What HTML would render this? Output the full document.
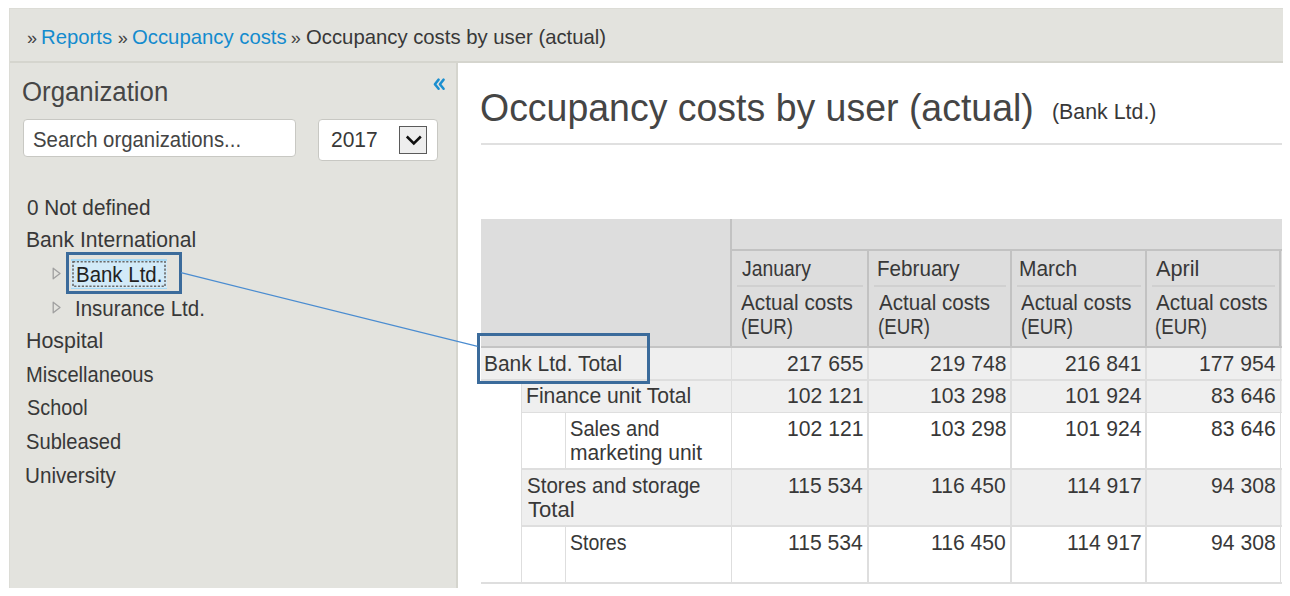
<!DOCTYPE html>
<html><head><meta charset="utf-8">
<style>
html,body{margin:0;padding:0;background:#fff;width:1290px;height:596px;overflow:hidden;position:relative;font-family:"Liberation Sans",sans-serif;color:#333;}
.a{position:absolute;}
.t{position:absolute;white-space:nowrap;line-height:1;transform-origin:0 0;}
.inp{position:absolute;background:#fff;border:1.5px solid #c8c8c3;border-radius:4px;box-sizing:border-box;}
</style></head><body>
<div class="a" style="left:9px;top:8px;width:1274px;height:53px;background:#e3e3de;"></div>
<div class="a" style="left:9px;top:61px;width:1274px;height:2px;background:#d5d5ce;"></div>
<div class="a" style="left:9px;top:63px;width:447px;height:524.5px;background:#e3e3de;"></div>
<div class="a" style="left:456px;top:63px;width:2px;height:524.5px;background:#d5d5ce;"></div>
<svg class="a" style="left:431px;top:76px" width="16" height="16" viewBox="0 0 16 16"><path d="M7.6 3.6 L3.9 8.2 L7.6 12.8 M12.6 3.6 L8.9 8.2 L12.6 12.8" fill="none" stroke="#1b8fd0" stroke-width="2.5" stroke-linecap="round" stroke-linejoin="round"/></svg>
<div class="inp" style="left:23px;top:119px;width:273px;height:38px;"></div>
<div class="inp" style="left:318px;top:119px;width:120px;height:42px;"></div>
<div class="a" style="left:399px;top:126px;width:28px;height:28px;border:1.5px solid #5a5a5a;background:#eeeeee;box-sizing:border-box;"></div>
<svg class="a" style="left:399px;top:126px" width="28" height="28" viewBox="0 0 28 28"><path d="M7.8 10.5 L14.8 17.5 L21.8 10.5" fill="none" stroke="#111" stroke-width="2.5"/></svg>
<div class="a" style="left:71px;top:259px;width:96px;height:30px;background:#d2eaf8;"></div>
<div class="a" style="left:71px;top:259px;width:96px;height:1.5px;background:#a6daf6;"></div>
<div class="a" style="left:71px;top:287.5px;width:96px;height:1.5px;background:#a6daf6;"></div>
<svg class="a" style="left:71px;top:259px" width="96" height="30"><rect x="2" y="2.7" width="92" height="24.6" fill="none" stroke="#6a6a6a" stroke-width="1.6" stroke-dasharray="2.2 1.6"/></svg>
<svg class="a" style="left:52px;top:267px" width="10" height="13" viewBox="0 0 10 13"><path d="M1.2 1.2 L8 6.5 L1.2 11.8 Z" fill="none" stroke="#a0a0a0" stroke-width="1.3" stroke-linejoin="round"/></svg>
<svg class="a" style="left:52px;top:301px" width="10" height="13" viewBox="0 0 10 13"><path d="M1.2 1.2 L8 6.5 L1.2 11.8 Z" fill="none" stroke="#a0a0a0" stroke-width="1.3" stroke-linejoin="round"/></svg>
<div class="a" style="left:9px;top:8px;width:1274px;height:1px;background:#dcdcd6;"></div>
<div class="a" style="left:9px;top:8px;width:1px;height:579.5px;background:#dcdcd6;"></div>
<div class="a" style="left:481px;top:143px;width:801px;height:2px;background:#e0e0e0;"></div>
<div class="a" style="left:481px;top:219px;width:801px;height:128px;background:#dddddd;"></div>
<div class="a" style="left:730px;top:219px;width:2px;height:128px;background:#c2c2c2;"></div>
<div class="a" style="left:731px;top:249px;width:551px;height:2px;background:#c2c2c2;"></div>
<div class="a" style="left:866.5px;top:250px;width:2px;height:97px;background:#c2c2c2;"></div>
<div class="a" style="left:1009.5px;top:250px;width:2px;height:97px;background:#c2c2c2;"></div>
<div class="a" style="left:1144.5px;top:250px;width:2px;height:97px;background:#c2c2c2;"></div>
<div class="a" style="left:1279px;top:250px;width:2px;height:97px;background:#c2c2c2;"></div>
<div class="a" style="left:737px;top:285.3px;width:125.5px;height:1.8px;background:#d0d0d0;"></div>
<div class="a" style="left:873.5px;top:285.3px;width:132.0px;height:1.8px;background:#d0d0d0;"></div>
<div class="a" style="left:1016.5px;top:285.3px;width:124.0px;height:1.8px;background:#d0d0d0;"></div>
<div class="a" style="left:1151.5px;top:285.3px;width:123.5px;height:1.8px;background:#d0d0d0;"></div>
<div class="a" style="left:481px;top:346px;width:801px;height:2px;background:#c4c4c4;"></div>
<div class="a" style="left:481px;top:348px;width:801px;height:31.5px;background:#efefef;"></div>
<div class="a" style="left:481px;top:379.0px;width:801px;height:1.5px;background:#dedede;"></div>
<div class="a" style="left:521.5px;top:380.5px;width:760.5px;height:31.5px;background:#efefef;"></div>
<div class="a" style="left:521.5px;top:411.5px;width:760.5px;height:1.5px;background:#dedede;"></div>
<div class="a" style="left:565.5px;top:413px;width:716.5px;height:55.5px;background:#ffffff;"></div>
<div class="a" style="left:521.5px;top:468.0px;width:760.5px;height:1.5px;background:#dedede;"></div>
<div class="a" style="left:521.5px;top:469.5px;width:760.5px;height:56.0px;background:#efefef;"></div>
<div class="a" style="left:521.5px;top:525.0px;width:760.5px;height:1.5px;background:#dedede;"></div>
<div class="a" style="left:565.5px;top:526.5px;width:716.5px;height:56.0px;background:#ffffff;"></div>
<div class="a" style="left:481px;top:582.0px;width:801px;height:1.5px;background:#dedede;"></div>
<div class="a" style="left:520.5px;top:380px;width:1.8px;height:203px;background:#dedede;"></div>
<div class="a" style="left:564.5px;top:412px;width:1.8px;height:57px;background:#dedede;"></div>
<div class="a" style="left:564.5px;top:526px;width:1.8px;height:57px;background:#dedede;"></div>
<div class="a" style="left:730.5px;top:348px;width:1.5px;height:235px;background:#dedede;"></div>
<div class="a" style="left:867.0px;top:348px;width:1.5px;height:235px;background:#dedede;"></div>
<div class="a" style="left:1010.0px;top:348px;width:1.5px;height:235px;background:#dedede;"></div>
<div class="a" style="left:1145.0px;top:348px;width:1.5px;height:235px;background:#dedede;"></div>
<div class="a" style="left:1279.5px;top:348px;width:1.5px;height:235px;background:#dedede;"></div>
<div class="t" style="left:26.90px;top:29px;font-size:18px;color:#444;">»</div>
<div class="t" style="left:40.97px;top:26px;font-size:21px;color:#138bce;transform:scaleX(0.9662);">Reports</div>
<div class="t" style="left:117.80px;top:29px;font-size:18px;color:#444;">»</div>
<div class="t" style="left:131.93px;top:26px;font-size:21px;color:#138bce;transform:scaleX(0.9671);">Occupancy costs</div>
<div class="t" style="left:290.80px;top:29px;font-size:18px;color:#444;">»</div>
<div class="t" style="left:306.33px;top:26px;font-size:21px;color:#383838;transform:scaleX(0.9666);">Occupancy costs by user (actual)</div>
<div class="t" style="left:22.44px;top:79px;font-size:27px;color:#464646;transform:scaleX(0.9553);">Organization</div>
<div class="t" style="left:32.95px;top:130px;font-size:21.5px;color:#444;transform:scaleX(0.9461);">Search organizations...</div>
<div class="t" style="left:330.52px;top:130px;font-size:21.5px;color:#383838;transform:scaleX(0.9761);">2017</div>
<div class="t" style="left:26.53px;top:198px;font-size:21.5px;color:#383838;transform:scaleX(0.9651);">0 Not defined</div>
<div class="t" style="left:25.54px;top:230px;font-size:21.5px;color:#383838;transform:scaleX(0.9818);">Bank International</div>
<div class="t" style="left:75.70px;top:265px;font-size:21.5px;color:#222;transform:scaleX(0.9506);">Bank Ltd.</div>
<div class="t" style="left:74.89px;top:299px;font-size:21.5px;color:#383838;transform:scaleX(0.9530);">Insurance Ltd.</div>
<div class="t" style="left:25.91px;top:331px;font-size:21.5px;color:#383838;transform:scaleX(0.9947);">Hospital</div>
<div class="t" style="left:26.03px;top:365px;font-size:21.5px;color:#383838;transform:scaleX(0.9366);">Miscellaneous</div>
<div class="t" style="left:26.98px;top:398px;font-size:21.5px;color:#383838;transform:scaleX(0.9219);">School</div>
<div class="t" style="left:26.46px;top:432px;font-size:21.5px;color:#383838;transform:scaleX(0.9370);">Subleased</div>
<div class="t" style="left:25.48px;top:466px;font-size:21.5px;color:#383838;transform:scaleX(0.9613);">University</div>
<div class="t" style="left:480.33px;top:89px;font-size:38px;color:#454545;transform:scaleX(0.9858);">Occupancy costs by user (actual)</div>
<div class="t" style="left:1051.81px;top:102px;font-size:21.5px;color:#383838;transform:scaleX(0.9932);">(Bank Ltd.)</div>
<div class="t" style="left:742.00px;top:259px;font-size:21.5px;color:#383838;transform:scaleX(0.9000);">January</div>
<div class="t" style="left:741.40px;top:293px;font-size:21.5px;color:#383838;transform:scaleX(0.9643);">Actual costs</div>
<div class="t" style="left:741.23px;top:317px;font-size:21.5px;color:#383838;transform:scaleX(0.8690);">(EUR)</div>
<div class="t" style="left:876.88px;top:259px;font-size:21.5px;color:#383838;transform:scaleX(0.9595);">February</div>
<div class="t" style="left:878.80px;top:293px;font-size:21.5px;color:#383838;transform:scaleX(0.9574);">Actual costs</div>
<div class="t" style="left:877.93px;top:317px;font-size:21.5px;color:#383838;transform:scaleX(0.8690);">(EUR)</div>
<div class="t" style="left:1019.45px;top:259px;font-size:21.5px;color:#383838;transform:scaleX(0.9737);">March</div>
<div class="t" style="left:1021.40px;top:293px;font-size:21.5px;color:#383838;transform:scaleX(0.9522);">Actual costs</div>
<div class="t" style="left:1020.53px;top:317px;font-size:21.5px;color:#383838;transform:scaleX(0.8690);">(EUR)</div>
<div class="t" style="left:1155.70px;top:259px;font-size:21.5px;color:#383838;transform:scaleX(1.0095);">April</div>
<div class="t" style="left:1155.70px;top:293px;font-size:21.5px;color:#383838;transform:scaleX(0.9635);">Actual costs</div>
<div class="t" style="left:1154.83px;top:317px;font-size:21.5px;color:#383838;transform:scaleX(0.8690);">(EUR)</div>
<div class="t" style="left:484.35px;top:354px;font-size:21.5px;color:#383838;transform:scaleX(0.9741);">Bank Ltd. Total</div>
<div class="t" style="left:526.13px;top:386px;font-size:21.5px;color:#383838;transform:scaleX(0.9830);">Finance unit Total</div>
<div class="t" style="left:569.66px;top:419px;font-size:21.5px;color:#383838;transform:scaleX(0.9362);">Sales and</div>
<div class="t" style="left:569.62px;top:443px;font-size:21.5px;color:#383838;transform:scaleX(0.9784);">marketing unit</div>
<div class="t" style="left:527.04px;top:476px;font-size:21.5px;color:#383838;transform:scaleX(0.9550);">Stores and storage</div>
<div class="t" style="left:528.00px;top:500px;font-size:21.5px;color:#383838;transform:scaleX(1.0273);">Total</div>
<div class="t" style="left:569.89px;top:533px;font-size:21.5px;color:#383838;transform:scaleX(0.9098);">Stores</div>
<div class="t" style="left:786.82px;top:354px;font-size:21.5px;color:#383838;transform:scaleX(0.9829);">217 655</div>
<div class="t" style="left:929.82px;top:354px;font-size:21.5px;color:#383838;transform:scaleX(0.9829);">219 748</div>
<div class="t" style="left:1064.82px;top:354px;font-size:21.5px;color:#383838;transform:scaleX(0.9829);">216 841</div>
<div class="t" style="left:1199.32px;top:354px;font-size:21.5px;color:#383838;transform:scaleX(0.9829);">177 954</div>
<div class="t" style="left:786.82px;top:386px;font-size:21.5px;color:#383838;transform:scaleX(0.9829);">102 121</div>
<div class="t" style="left:929.82px;top:386px;font-size:21.5px;color:#383838;transform:scaleX(0.9829);">103 298</div>
<div class="t" style="left:1064.82px;top:386px;font-size:21.5px;color:#383838;transform:scaleX(0.9829);">101 924</div>
<div class="t" style="left:1211.11px;top:386px;font-size:21.5px;color:#383838;transform:scaleX(0.9829);">83 646</div>
<div class="t" style="left:786.82px;top:419px;font-size:21.5px;color:#383838;transform:scaleX(0.9829);">102 121</div>
<div class="t" style="left:929.82px;top:419px;font-size:21.5px;color:#383838;transform:scaleX(0.9829);">103 298</div>
<div class="t" style="left:1064.82px;top:419px;font-size:21.5px;color:#383838;transform:scaleX(0.9829);">101 924</div>
<div class="t" style="left:1211.11px;top:419px;font-size:21.5px;color:#383838;transform:scaleX(0.9829);">83 646</div>
<div class="t" style="left:787.80px;top:476px;font-size:21.5px;color:#383838;transform:scaleX(0.9829);">115 534</div>
<div class="t" style="left:930.80px;top:476px;font-size:21.5px;color:#383838;transform:scaleX(0.9829);">116 450</div>
<div class="t" style="left:1066.78px;top:476px;font-size:21.5px;color:#383838;transform:scaleX(0.9829);">114 917</div>
<div class="t" style="left:1211.11px;top:476px;font-size:21.5px;color:#383838;transform:scaleX(0.9829);">94 308</div>
<div class="t" style="left:787.80px;top:533px;font-size:21.5px;color:#383838;transform:scaleX(0.9829);">115 534</div>
<div class="t" style="left:930.80px;top:533px;font-size:21.5px;color:#383838;transform:scaleX(0.9829);">116 450</div>
<div class="t" style="left:1066.78px;top:533px;font-size:21.5px;color:#383838;transform:scaleX(0.9829);">114 917</div>
<div class="t" style="left:1211.11px;top:533px;font-size:21.5px;color:#383838;transform:scaleX(0.9829);">94 308</div>
<div class="a" style="left:66px;top:252px;width:116px;height:42px;border:3px solid #3b6b9b;box-sizing:border-box;"></div>
<div class="a" style="left:477px;top:333px;width:173px;height:51px;border:3px solid #3b6b9b;box-sizing:border-box;"></div>
<svg class="a" style="left:0;top:0" width="1290" height="596"><line x1="181" y1="272.7" x2="477.6" y2="346.4" stroke="#4a8cd0" stroke-width="1.2"/></svg>
</body></html>
